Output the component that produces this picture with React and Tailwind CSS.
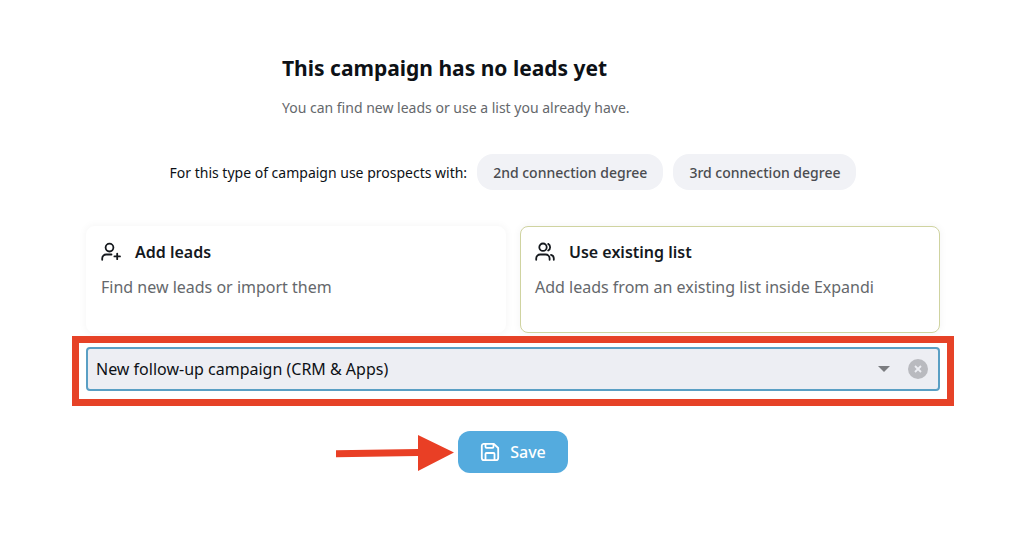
import React, { useState } from "react";

const DEGREES = ["2nd connection degree", "3rd connection degree"];
const CAMPAIGNS = ["New follow-up campaign (CRM & Apps)"];

/* =========================
   ICONS
========================= */
function Icon({ children, className }) {
  return (
    <svg
      viewBox="0 0 20 20"
      fill="none"
      stroke="currentColor"
      strokeWidth="1.8"
      strokeLinecap="round"
      strokeLinejoin="round"
      className={className}
      aria-hidden="true"
    >
      {children}
    </svg>
  );
}

function AddUserIcon() {
  return (
    <Icon className="w-5 h-5">
      <circle cx="8.5" cy="5.6" r="3.9" />
      <path d="M1.2 17.8v-1.3a4 4 0 0 1 4-4h5.3M16.2 11.6v5.6M13.4 14.4H19" />
    </Icon>
  );
}

function UsersIcon() {
  return (
    <Icon className="w-5 h-5">
      <circle cx="8" cy="5.2" r="3.7" />
      <path d="M1.2 17.8v-1.3a4 4 0 0 1 4-4h5.4a4 4 0 0 1 4 4v1.3M13.2 1.9a3.8 3.8 0 0 1 0 6.6M16 12.8c1.9.5 2.8 1.9 2.8 3.7v1.3" />
    </Icon>
  );
}

function SaveIcon() {
  return (
    <Icon className="w-5 h-5">
      <path d="M3.5 1.8h10.3l4.4 4.2v10a2.2 2.2 0 0 1-2.2 2.2H4A2.2 2.2 0 0 1 1.8 16V3.8a2 2 0 0 1 1.7-2z" />
      <path d="M5.5 2v2.8a1 1 0 0 0 1 1h6a1 1 0 0 0 1-1V2M5.5 18v-6a1 1 0 0 1 1-1h7a1 1 0 0 1 1 1v6" />
    </Icon>
  );
}

function OptionCard({ icon, title, text, active, onClick }) {
  return (
    <button
      type="button"
      onClick={onClick}
      aria-pressed={active}
      className={`flex flex-col items-start h-[107px] px-3.5 pt-[13px] rounded-lg border bg-white text-left shadow-[0_0_8px_rgba(0,0,0,0.05)] ${
        active ? "border-[#cfd3a0]" : "border-white"
      }`}
    >
      <span className="flex items-center gap-3.5 h-6 font-semibold text-[16px] text-[#15191e]">
        {icon}
        {title}
      </span>
      <span className="mt-[11px] text-[16px] leading-6 text-[#65686c]">{text}</span>
    </button>
  );
}

export default function App() {
  const [source, setSource] = useState("existing");
  const [campaign, setCampaign] = useState(CAMPAIGNS[0]);

  return (
    <main className="pl-[72px] pr-[70px] pt-[54px] bg-white font-['Noto_Sans',sans-serif] text-[#0d1116]">
      {/* TITLE */}
      <header className="w-[462px] mx-auto">
        <h1 className="text-[21px] leading-7 font-bold">This campaign has no leads yet</h1>
        <p className="mt-4 text-[14px] leading-5 text-[#65686c]">
          You can find new leads or use a list you already have.
        </p>
      </header>

      {/* DEGREES */}
      <div className="mt-9 flex items-center justify-center gap-2.5 text-[14px]">
        <p>For this type of campaign use prospects with:</p>
        {DEGREES.map((degree) => (
          <span
            key={degree}
            className="h-9 px-4 flex items-center rounded-2xl bg-[#f1f2f6] font-medium text-[#4a4c50]"
          >
            {degree}
          </span>
        ))}
      </div>

      {/* LEAD SOURCE */}
      <div className="mt-9 mx-3.5 grid grid-cols-2 gap-3.5">
        <OptionCard
          icon={<AddUserIcon />}
          title="Add leads"
          text="Find new leads or import them"
          active={source === "new"}
          onClick={() => setSource("new")}
        />
        <OptionCard
          icon={<UsersIcon />}
          title="Use existing list"
          text="Add leads from an existing list inside Expandi"
          active={source === "existing"}
          onClick={() => setSource("existing")}
        />
      </div>

      {/* CAMPAIGN SELECT */}
      <div className="relative mt-[3px] border-[7px] border-[#e64227] bg-white px-[7px] pt-1 pb-2">
        <div className="relative">
          <select
            aria-label="Campaign"
            value={campaign}
            onChange={(e) => setCampaign(e.target.value)}
            className="block w-full h-11 pl-2 pr-20 appearance-none rounded border-2 border-[#5a9fc4] bg-[#edeef3] text-[16px] outline-none"
          >
            <option value="" />
            {CAMPAIGNS.map((name) => (
              <option key={name}>{name}</option>
            ))}
          </select>
          <div className="absolute inset-y-0 right-3 flex items-center gap-[18px] pointer-events-none">
            <svg viewBox="0 0 12 6" className="w-3 h-1.5 fill-[#7b7c80]" aria-hidden="true">
              <path d="M0 0h12L6 6z" />
            </svg>
            <button
              type="button"
              aria-label="Clear"
              onClick={() => setCampaign("")}
              className="flex items-center justify-center w-5 h-5 rounded-full bg-[#b9babf] pointer-events-auto"
            >
              <svg viewBox="0 0 8 8" className="w-2 h-2" stroke="#edeef3" strokeWidth="1.8" aria-hidden="true">
                <path d="M1 1l6 6M7 1L1 7" />
              </svg>
            </button>
          </div>
        </div>
      </div>

      {/* SAVE */}
      <div className="mt-[25px] flex justify-center">
        <div className="relative">
          <svg
            viewBox="0 0 118 36"
            className="absolute right-full top-1 mr-1 w-[118px] h-9 fill-[#e93f25]"
            aria-hidden="true"
          >
            <path d="M0 15.2L82 14V0l36 17.6L82 36V21L0 22.2z" />
          </svg>
          <button
            type="button"
            className="flex items-center gap-2.5 h-[42px] px-[22px] rounded-xl bg-[#54abde] text-white text-[16px] font-medium"
          >
            <SaveIcon />
            Save
          </button>
        </div>
      </div>
    </main>
  );
}
